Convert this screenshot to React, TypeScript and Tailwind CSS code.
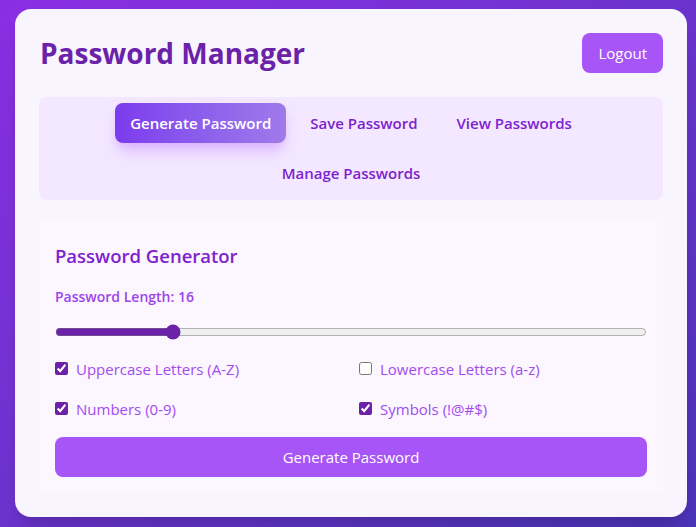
import React, { useState } from 'react';

const tabs = ['Generate Password', 'Save Password', 'View Passwords', 'Manage Passwords'];

const Option = ({ label, checked, onChange }: { label: string; checked: boolean; onChange: () => void }) => (
  <label className="flex items-center gap-2 h-[40px] text-[15px] text-[#a24cf0] cursor-pointer">
    <input type="checkbox" checked={checked} onChange={onChange} className="w-[13px] h-[13px] accent-[#6b21a8]" />
    {label}
  </label>
);

const App = () => {
  const [active, setActive] = useState(0);
  const [length, setLength] = useState(16);
  const [opts, setOpts] = useState({ upper: true, lower: false, numbers: true, symbols: true });
  const toggle = (k: keyof typeof opts) => setOpts({ ...opts, [k]: !opts[k] });

  return (
    <div
      className="min-h-screen bg-linear-to-br from-[#8b2ee3] to-[#4a34b8] pt-[9px] pb-[10px] pl-[15px] pr-[9px]"
      style={{ fontFamily: '"Open Sans", sans-serif' }}
    >
      <div className="w-full bg-[#f8f5fe] rounded-2xl shadow-xl px-6 pt-6 pb-6">
        <div className="flex items-center justify-between">
          <h1 className="text-[28px] leading-10 font-bold text-[#6b21a8] pl-px">Password Manager</h1>
          <button className="h-10 px-4 rounded-lg bg-[#a855f7] text-white text-[15px]">Logout</button>
        </div>

        <nav className="mt-6 bg-[#f3e8ff] rounded-lg pt-[6px] pb-[7px] flex flex-wrap justify-center gap-x-[9px] gap-y-[10px]">
          {tabs.map((t, i) => (
            <button
              key={t}
              onClick={() => setActive(i)}
              className={
                i === active
                  ? 'h-10 px-[15px] rounded-lg text-[15px] font-semibold text-white bg-linear-to-r from-[#7c3aed] to-[#9f7aea] shadow-lg shadow-purple-300'
                  : 'h-10 px-[15px] rounded-lg text-[15px] font-semibold text-[#7e22ce]'
              }
            >
              {t}
            </button>
          ))}
        </nav>

        <section className="mt-5 bg-[#fcf6ff] rounded-lg px-4 pt-[22px] pb-4">
          <h3 className="text-[18.5px] font-semibold text-[#7e22ce]">Password Generator</h3>
          <div className="mt-4 text-[14px] font-semibold text-[#9b45ec]">Password Length: {length}</div>
          <input
            type="range"
            min={8}
            max={50}
            value={length}
            onChange={e => setLength(Number(e.target.value))}
            className="mt-[17px] w-full accent-[#6b21a8]"
          />
          <div className="mt-[3px] grid grid-cols-2 gap-x-4">
            <Option label="Uppercase Letters (A-Z)" checked={opts.upper} onChange={() => toggle('upper')} />
            <Option label="Lowercase Letters (a-z)" checked={opts.lower} onChange={() => toggle('lower')} />
            <Option label="Numbers (0-9)" checked={opts.numbers} onChange={() => toggle('numbers')} />
            <Option label="Symbols (!@#$)" checked={opts.symbols} onChange={() => toggle('symbols')} />
          </div>
          <button className="mt-2 w-full h-10 rounded-lg bg-[#a855f7] text-white text-[15px]">Generate Password</button>
        </section>
      </div>
    </div>
  );
};

export default App;
